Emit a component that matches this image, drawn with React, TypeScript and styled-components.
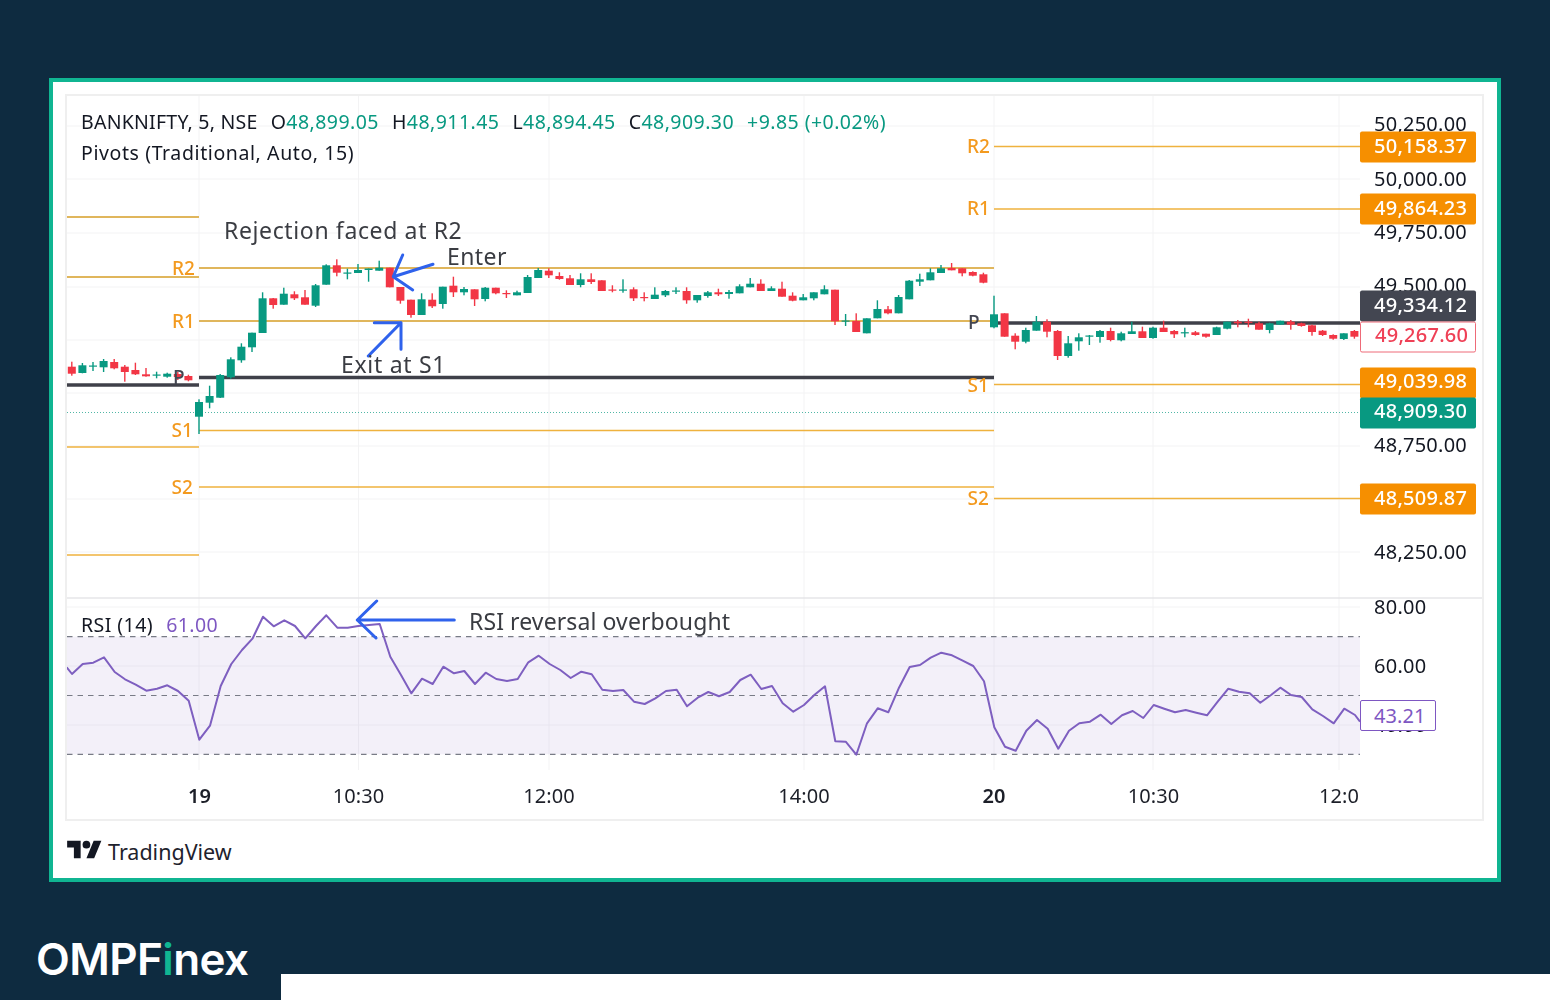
import { FC } from "react";
import styled, { createGlobalStyle } from "styled-components";

type Candle = [string, number, number, number, number];

// colour, body top, body bottom, wick top, wick bottom (page y)
const candles: Candle[] = [
  ["r",366.7,373.7,361.7,375.7],["g",365.3,373,363,373.3],["g",365.5,366.7,362,371],["g",361,367.3,359,372],
  ["r",362,368.3,359,369.3],["r",366.7,372,365,381.7],["r",370,374.3,362.7,375],["r",374.3,376.3,368,376.7],
  ["g",374.5,375.7,371.7,378.3],["g",373.7,376.7,372.7,377.7],["r",374,377,372,380],["r",376,380.3,374.7,381.3],
  ["g",402,416.7,399.3,434],["g",396,402.7,385.7,408.3],["g",375,397.7,374,398],["g",359.3,377.3,357.3,378.7],
  ["g",346.7,360.3,343.3,362.7],["g",332.7,347.3,332.7,352],["g",298.3,333,292.3,333],["r",298.3,305,298,308.7],
  ["g",293.7,304.7,287.7,304.7],["r",294.3,298.3,291.3,300],["r",297.3,304.7,290,304.7],["g",285.3,305.7,284,307],
  ["g",265.3,284.7,264.3,284.7],["r",265.3,272.7,259.3,276.3],["g",272.5,273.7,268.7,279.3],["g",270,273,264,273],
  ["g",268.5,270,268.5,281.7],["g",267.7,270.7,260.7,270.7],["r",267.7,287.3,267.7,287.3],["r",287,300.7,287,303.7],
  ["r",299.7,315,299.7,317.7],["g",299.3,315,293.3,315],["r",299.7,306.3,293.3,308],["g",286.7,304,286.7,308.7],
  ["r",285.7,292.3,276.7,297],["g",289,292.3,287,295.3],["r",289.3,299.3,289.3,306],["g",287.7,299,287,301.3],
  ["r",287.7,293.3,287.7,294.3],["r",293,294.2,290.3,298],["g",292.3,295.3,290.7,295.3],["g",277,293,275,293],
  ["g",270,278,268,278],["r",270.7,275.3,268.3,278],["r",276,279,272.3,279.7],["r",278.3,285,275,285],
  ["g",279.3,285,273.3,287.3],["r",279.3,282,273.3,284],["r",280.3,291,280.3,291],["r",289.5,290.7,285.3,292.3],
  ["g",289.5,290.7,279.3,292.7],["r",289.3,298.3,287.3,301],["r",297,298.2,292.3,301.3],["g",294.7,299,287.3,299],
  ["g",291,295.3,290,297],["g",290.5,291.7,287.3,294],["r",291,300.3,287.3,303.7],["g",295,300.3,295,302.7],
  ["g",292.3,296,291,297.7],["r",292.3,294.3,288.7,296],["g",292,294,290,298.7],["g",286.3,293.3,284.3,293.3],
  ["g",283.7,287.3,278,287.3],["r",283.7,291,279.3,291],["g",288.3,291,286.3,291],["r",288.7,296.7,281.7,296.7],
  ["r",295.7,300.7,292.3,301.3],["g",297.3,300.3,294,300.3],["g",292.3,298.3,292.3,300.3],["g",289.3,294.3,285.3,294.3],
  ["r",289.7,321.3,289.7,325],["g",320.5,321.7,314,326],["r",321,332,313.3,332],["g",318.3,333.3,318.3,333.3],
  ["g",309,318.3,300.3,318.3],["r",309.3,313.3,306,314.3],["g",297,313.3,295,313.3],["g",280.7,299.3,280,299.3],
  ["g",279.3,281.7,273.7,286],["g",272.3,280.3,268.3,280.3],["g",268.3,273,265,273],["r",268,270.3,263,270.3],
  ["r",268.3,273.3,268.3,276.3],["r",272,275.7,271.3,276.3],["r",274.3,282.7,272.7,283.3],["g",314.3,327.3,295.7,328.3],
  ["r",313.3,336.7,313.3,336.7],["r",335.7,341.7,333.3,349.3],["g",330,341.7,327.7,343.3],["g",321.7,330.7,316,330.7],
  ["r",321.7,331.7,319.3,337.3],["r",331,356,330,360],["g",343.3,356,336,357.7],["g",337.3,341.3,333.3,350.7],
  ["g",335.5,336.7,335,345],["g",331,337,330,342.7],["r",331,340,327.7,341.3],["g",333.3,340.3,331.7,341.3],
  ["g",331.3,334,321.7,334],["r",331.3,338,326.7,338],["g",327.7,338,326.7,338.7],["r",327.7,332,320.7,332],
  ["r",331,334.3,330,338],["g",332.2,333.4,327.7,337.3],["r",332.3,335,331,335.7],["r",333.7,336.7,333.7,337.7],
  ["g",327.3,335,326.7,335],["g",321.7,328.7,321.7,329.3],["r",321.7,323.3,320,327.3],["r",321.7,322.9,318.7,327.3],
  ["r",323.3,329.7,321.7,329.7],["g",323.3,330,322.7,333.3],["g",320.7,324.7,320.7,324.7],["r",321.7,324.7,320,329.7],
  ["r",323.3,326,322.7,326.7],["r",325.3,332,324.7,335.7],["r",330.7,335,330,336],["r",335,338.7,334.3,339.7],
  ["g",333.3,339,333.3,340],["r",331,336.7,330,338.7],
];

// rsi line traced in three runs, [x, y] scaled 3x from an origin at x0 / y 590
const rsiRuns: { x0: number; pts: number[][] }[] = [
  { x0: 50, pts: [[50,232],[66,252],[98,222],[130,218],[162,202],[194,246],[225,268],[257,284],[289,302],[321,296],[352,286],[384,303],[416,332],[448,449],[480,407],[512,288],[544,222],[576,180],[608,145],[639,80],[671,109],[703,91],[735,108],[766,145],[798,108],[829,76],[862,113],[893,113],[925,108],[957,105],[989,102],[1021,200],[1053,255],[1084,310],[1116,266],[1148,282],[1180,230],[1212,250],[1243,243],[1275,282],[1307,248],[1339,267],[1371,273],[1403,267],[1435,217],[1466,197]] },
  { x0: 540, pts: [[29,222],[61,240],[92,264],[124,245],[155,253],[187,299],[219,303],[250,300],[282,335],[314,342],[346,325],[378,303],[410,299],[441,349],[473,323],[505,306],[537,319],[569,306],[601,270],[632,254],[664,297],[696,288],[728,340],[760,365],[792,345],[823,315],[855,289],[886,454],[917,455],[949,494],[981,400],[1013,355],[1045,367],[1077,293],[1109,231],[1140,225],[1172,203],[1204,188],[1236,196],[1268,212],[1300,228],[1332,274],[1363,412],[1395,470],[1427,482],[1459,422]] },
  { x0: 1000, pts: [[111,390],[143,416],[175,476],[207,422],[238,400],[270,395],[302,374],[334,402],[366,376],[398,363],[430,384],[461,345],[493,356],[525,367],[557,360],[589,368],[621,376],[653,335],[685,296],[717,305],[749,310],[781,338],[813,315],[841,293],[873,315],[905,321],[937,358],[969,378],[1001,400],[1033,356],[1065,375],[1080,395]] },
];

const rsiPoints = rsiRuns
  .flatMap((run) => run.pts.map(([x, y]) => `${(run.x0 + x / 3).toFixed(1)},${(590 + y / 3).toFixed(1)}`))
  .join(" ");

const priceGrid = [126, 179, 233, 287, 340, 393, 446, 499, 552];
const rsiGrid = [607, 666, 725];
const timeGrid = [199, 358.5, 549, 804, 994, 1153, 1339];
const dashes = [636.7, 695.5, 754.3];

const pivots = [
  { x1: 67, x2: 199, y: 217, kind: "soft" },
  { x1: 67, x2: 199, y: 277, kind: "soft" },
  { x1: 67, x2: 199, y: 385, kind: "pivot" },
  { x1: 67, x2: 199, y: 447, kind: "thin" },
  { x1: 67, x2: 199, y: 555, kind: "thin" },
  { x1: 199, x2: 994, y: 268, kind: "soft" },
  { x1: 199, x2: 994, y: 321, kind: "soft" },
  { x1: 199, x2: 994, y: 377.5, kind: "pivot" },
  { x1: 199, x2: 994, y: 430.5, kind: "thin" },
  { x1: 199, x2: 994, y: 487, kind: "thin" },
  { x1: 994, x2: 1360, y: 146.5, kind: "thin" },
  { x1: 994, x2: 1360, y: 209, kind: "thin" },
  { x1: 994, x2: 1360, y: 323, kind: "pivot" },
  { x1: 994, x2: 1360, y: 384.5, kind: "thin" },
  { x1: 994, x2: 1360, y: 498.5, kind: "thin" },
];

const pivotLabels = [
  { x: 172, y: 267.5, t: "R2" }, { x: 172, y: 320.5, t: "R1" }, { x: 173, y: 377, t: "P", dark: true },
  { x: 171.5, y: 429.5, t: "S1" }, { x: 171.5, y: 486.5, t: "S2" },
  { x: 967, y: 146, t: "R2" }, { x: 967, y: 207.5, t: "R1" }, { x: 968, y: 322, t: "P", dark: true },
  { x: 967.5, y: 384.5, t: "S1" }, { x: 967.5, y: 497.5, t: "S2" },
];

const axisLabels = [
  { y: 124, t: "50,250.00" }, { y: 179, t: "50,000.00" }, { y: 232, t: "49,750.00" }, { y: 285, t: "49,500.00" },
  { y: 445, t: "48,750.00" }, { y: 552, t: "48,250.00" }, { y: 607, t: "80.00" }, { y: 666, t: "60.00" }, { y: 725, t: "40.00" },
];

const tags = [
  { y: 147, t: "50,158.37", kind: "orange" }, { y: 209, t: "49,864.23", kind: "orange" },
  { y: 306, t: "49,334.12", kind: "dark" }, { y: 336.7, t: "49,267.60", kind: "outline" },
  { y: 382.5, t: "49,039.98", kind: "orange" }, { y: 412.5, t: "48,909.30", kind: "green" },
  { y: 499, t: "48,509.87", kind: "orange" },
];

const timeLabels = [
  { x: 199.5, t: "19", bold: true }, { x: 358.5, t: "10:30" }, { x: 549, t: "12:00" }, { x: 804, t: "14:00" },
  { x: 994, t: "20", bold: true }, { x: 1153.5, t: "10:30" }, { x: 1339, t: "12:0" },
];

const ohlc = [
  ["O", "48,899.05"], ["H", "48,911.45"], ["L", "48,894.45"], ["C", "48,909.30"],
];

const arrows = [
  "M402.7 255 L393.3 276.7 L433 264.3 M393.3 276.7 L412.7 290",
  "M374.3 322.7 H401 V349.3 M401 322.7 L368.3 356",
  "M376.7 601 L357.3 620 L376 638 M357.3 620 H454.3",
];

const App: FC = () => {
  return (
    <Page>
      <GlobalStyle />
      <Card>
        <ChartFrame>
          <svg width={1417} height={725} viewBox="66 95 1417 725" style={{ display: "block" }}>
            {priceGrid.map((y) => <GridLine key={y} x1={67} x2={1360} y1={y} y2={y} />)}
            {rsiGrid.map((y) => <GridLine key={y} x1={67} x2={1360} y1={y} y2={y} />)}
            {timeGrid.map((x) => <GridLine key={x} x1={x} x2={x} y1={96} y2={770} />)}
            <PaneLine x1={67} x2={1483} y1={598} y2={598} />

            <rect x={67} y={636.7} width={1293} height={117.6} fill="#7e57c2" fillOpacity={0.09} />
            {dashes.map((y) => <DashLine key={y} x1={67} x2={1360} y1={y} y2={y} />)}
            <polyline points={rsiPoints} fill="none" stroke="#7e5fc0" strokeWidth={2} strokeLinejoin="round" />

            {pivots.map((p) => <PivotLine key={`${p.x1}-${p.y}`} x1={p.x1} x2={p.x2} y1={p.y} y2={p.y} $kind={p.kind} />)}
            <LastLine x1={67} x2={1360} y1={412.5} y2={412.5} />

            {candles.map(([c, top, bottom, wickTop, wickBottom], i) => {
              const x = 199 + (i - 12) * 10.6;
              const fill = c === "g" ? "#089981" : "#f23645";
              return (
                <g key={i} fill={fill}>
                  <rect x={x - 0.7} y={wickTop} width={1.4} height={wickBottom - wickTop} />
                  <rect x={x - 4} y={top} width={8} height={bottom - top} />
                </g>
              );
            })}

            {pivotLabels.map((l) => (
              <PivotText key={`${l.x}-${l.y}`} x={l.x} y={l.y} $dark={l.dark}>{l.t}</PivotText>
            ))}
            {timeLabels.map((l) => (
              <TimeText key={`${l.x}`} x={l.x} y={795} $bold={l.bold}>{l.t}</TimeText>
            ))}
            {arrows.map((d) => (
              <path key={d} d={d} fill="none" stroke="#2f62ec" strokeWidth={3} strokeLinecap="round" strokeLinejoin="round" />
            ))}
          </svg>

          <Legend>
            <LegendRow>
              <Symbol>BANKNIFTY, 5, NSE</Symbol>
              <Ohlc>
                {ohlc.map(([k, v]) => (
                  <span key={k}>{k}<Value>{v}</Value></span>
                ))}
              </Ohlc>
              <Value>+9.85 (+0.02%)</Value>
            </LegendRow>
            <StudyRow>Pivots (Traditional, Auto, 15)</StudyRow>
          </Legend>

          <RsiLegend>RSI (14)<RsiValue>61.00</RsiValue></RsiLegend>

          <Note $x={224} $y={229.5} $spacing={0.63}>Rejection faced at R2</Note>
          <Note $x={447} $y={255.5} $spacing={0.4}>Enter</Note>
          <Note $x={341} $y={363.5} $spacing={0.7}>Exit at S1</Note>
          <Note $x={469} $y={620.5} $spacing={0.1}>RSI reversal overbought</Note>

          {axisLabels.map((l) => <AxisLabel key={l.t} $y={l.y}>{l.t}</AxisLabel>)}
          {tags.map((t) => <PriceTag key={t.t} $y={t.y} $kind={t.kind}>{t.t}</PriceTag>)}
          <RsiTag>43.21</RsiTag>
        </ChartFrame>

        <Footer>
          <svg width={35} height={27} viewBox="0 0 36 28" fill="#131722">
            <path d="M14 22H7V11H0V4h14v18zM28 22h-8l7.5-18h8L28 22z" />
            <circle cx={20} cy={8} r={4} />
          </svg>
          <FooterName>TradingView</FooterName>
        </Footer>
      </Card>

      <BottomRow>
        <Brand>OMPF<BrandAccent>i</BrandAccent>nex</Brand>
        <WhiteStrip />
      </BottomRow>
    </Page>
  );
};

const chartFont = `"Noto Sans", "Open Sans", sans-serif`;

const GlobalStyle = createGlobalStyle`
  html, body {
    margin: 0;
    padding: 0;
    background: #0e2b40;
  }
`;

const Page = styled.div`
  width: 1550px;
  height: 1000px;
  padding-top: 78px;
  box-sizing: border-box;
  overflow: hidden;
  background: #0e2b40;
  display: flex;
  flex-direction: column;
`;

const Card = styled.div`
  width: 1452px;
  height: 804px;
  margin-left: 49px;
  box-sizing: border-box;
  border: 4px solid #10b592;
  background: #fff;
  padding: 13px 14px 0 13px;
`;

const ChartFrame = styled.div`
  position: relative;
  width: 1417px;
  height: 725px;
  outline: 2px solid #efefef;
  outline-offset: -1px;
  font-family: ${chartFont};
  filter: blur(0.35px);
`;

const GridLine = styled.line`
  stroke: #f3f3f4;
  stroke-width: 1;
`;

const PaneLine = styled.line`
  stroke: #e6e6e8;
  stroke-width: 1.5;
`;

const DashLine = styled.line`
  stroke: #787b86;
  stroke-width: 1.2;
  stroke-dasharray: 5.5 5;
`;

const LastLine = styled.line`
  stroke: #089981;
  stroke-width: 1;
  stroke-dasharray: 1 2;
  opacity: 0.7;
`;

const PivotLine = styled.line<{ $kind: string }>`
  stroke: ${(p) => (p.$kind === "pivot" ? "#3f4049" : p.$kind === "soft" ? "#e0b65c" : "#efb23e")};
  stroke-width: ${(p) => (p.$kind === "pivot" ? 3.4 : p.$kind === "soft" ? 2.2 : 1.5)};
`;

const PivotText = styled.text<{ $dark?: boolean }>`
  font-family: ${chartFont};
  font-size: 19px;
  font-weight: 500;
  fill: ${(p) => (p.$dark ? "#434651" : "#f39a1f")};
  dominant-baseline: central;
`;

const TimeText = styled.text<{ $bold?: boolean }>`
  font-family: ${chartFont};
  font-size: 20px;
  font-weight: ${(p) => (p.$bold ? 600 : 400)};
  letter-spacing: 0.1px;
  fill: #1c1f28;
  text-anchor: middle;
  dominant-baseline: central;
`;

const Legend = styled.div`
  position: absolute;
  left: 15px;
  top: 11px;
  font-size: 19.5px;
  line-height: 31px;
  letter-spacing: 0.45px;
  color: #131722;
  white-space: nowrap;
`;

const LegendRow = styled.div`
  display: flex;
  gap: 13px;
`;

const Symbol = styled.span`
  letter-spacing: 0.25px;
`;

const StudyRow = styled.div`
  letter-spacing: 0.6px;
`;

const Ohlc = styled.div`
  display: flex;
  gap: 13px;
`;

const Value = styled.span`
  color: #089981;
`;

const RsiLegend = styled.div`
  position: absolute;
  left: 15px;
  top: 515px;
  font-size: 19.5px;
  line-height: 30px;
  letter-spacing: 0.45px;
  color: #131722;
`;

const RsiValue = styled.span`
  margin-left: 13px;
  color: #7e57c2;
`;

const Note = styled.div<{ $x: number; $y: number; $spacing: number }>`
  position: absolute;
  left: ${(p) => p.$x - 66}px;
  top: ${(p) => p.$y - 95}px;
  transform: translateY(-50%);
  font-size: 23px;
  letter-spacing: ${(p) => p.$spacing}px;
  color: #3a3c42;
  white-space: nowrap;
`;

const AxisLabel = styled.div<{ $y: number }>`
  position: absolute;
  left: 1308px;
  top: ${(p) => p.$y - 95}px;
  transform: translateY(-50%);
  font-size: 20px;
  line-height: 24px;
  letter-spacing: 0.25px;
  color: #131722;
`;

const tagColors: Record<string, string> = {
  orange: "#f68f00",
  dark: "#434651",
  green: "#089981",
};

const PriceTag = styled.div<{ $y: number; $kind: string }>`
  position: absolute;
  left: 1294px;
  top: ${(p) => p.$y - 95}px;
  width: 116px;
  height: 31px;
  transform: translateY(-50%);
  box-sizing: border-box;
  padding: 0 0 5px 14px;
  display: flex;
  align-items: center;
  font-size: 20px;
  font-weight: 500;
  letter-spacing: 0.25px;
  border-radius: 2px;
  color: ${(p) => (p.$kind === "outline" ? "#ef4056" : "#fff")};
  background: ${(p) => tagColors[p.$kind] ?? "#fff"};
  border: ${(p) => (p.$kind === "outline" ? "1px solid #ee6a78" : "none")};
`;

const RsiTag = styled.div`
  position: absolute;
  left: 1294px;
  top: 605px;
  width: 76px;
  height: 31px;
  box-sizing: border-box;
  padding: 0 0 1px 13px;
  display: flex;
  align-items: center;
  font-size: 20px;
  letter-spacing: 0.1px;
  border-radius: 2px;
  color: #7e57c2;
  background: #fff;
  border: 1px solid #7e57c2;
`;

const Footer = styled.div`
  display: flex;
  align-items: center;
  gap: 6px;
  height: 60px;
  padding-left: 1px;
`;

const FooterName = styled.span`
  font-family: "Noto Sans", sans-serif;
  font-size: 21.5px;
  color: #1e222d;
  margin-top: 3px;
`;

const BottomRow = styled.div`
  flex: 1;
  display: flex;
  align-items: flex-end;
`;

const Brand = styled.div`
  width: 245px;
  padding: 0 0 18px 36px;
  font-family: Inter, sans-serif;
  font-size: 44px;
  line-height: 46px;
  font-weight: 600;
  letter-spacing: -0.6px;
  color: #fff;
`;

const BrandAccent = styled.span`
  color: #10b592;
`;

const WhiteStrip = styled.div`
  flex: 1;
  height: 26px;
  background: #fff;
`;

export default App;
